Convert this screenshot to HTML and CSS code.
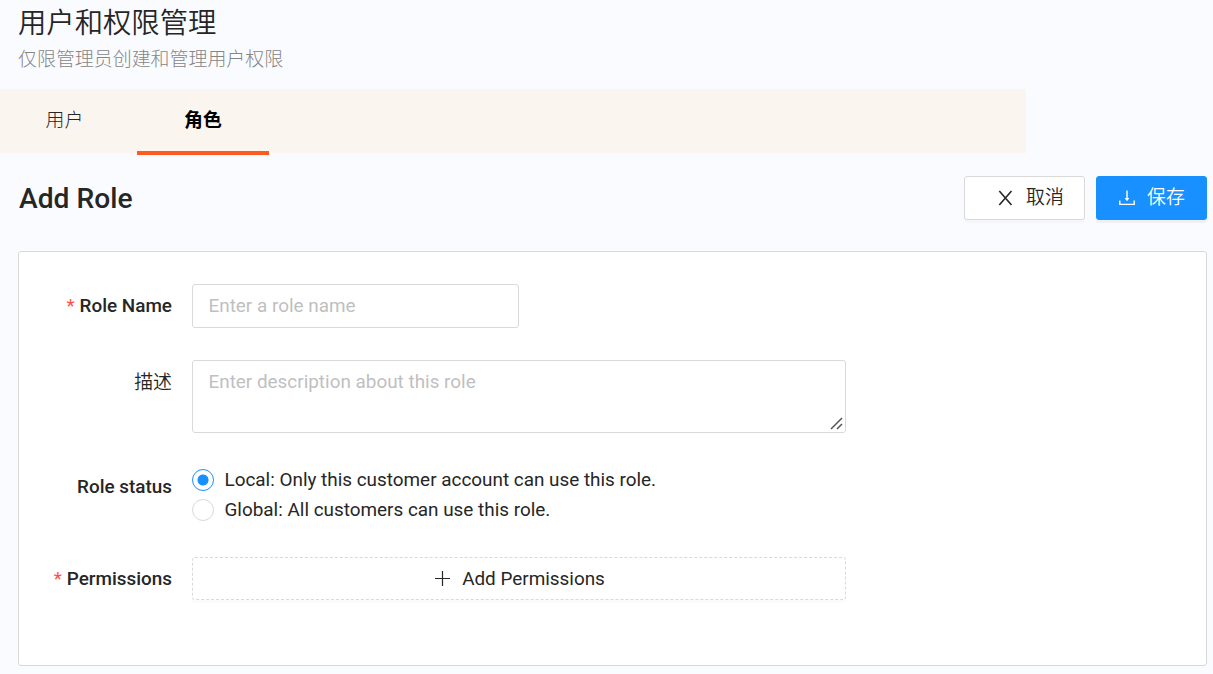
FILE: index.html
```html
<!DOCTYPE html>
<html lang="zh-CN">
<head>
<meta charset="utf-8">
<title>用户和权限管理</title>
<link rel="stylesheet" href="styles.css">
</head>
<body>
<header class="page-header">
  <h1 class="page-title">用户和权限管理</h1>
  <p class="page-subtitle">仅限管理员创建和管理用户权限</p>
</header>
<nav class="tabs">
  <a class="tab tab-users">用户</a>
  <a class="tab tab-active">角色</a>
</nav>
<main class="content">
  <div class="toolbar">
    <h2 class="section-title">Add Role</h2>
    <div class="actions">
      <button class="btn btn-cancel" type="button">
        <svg class="icon-close" viewBox="0 0 15 17" width="15" height="17" fill="none" stroke="currentColor" stroke-width="1.6"><path d="M1.3 1 13.5 15M13.5 1 1.3 15"/></svg>
        <span>取消</span>
      </button>
      <button class="btn btn-save" type="button">
        <svg class="icon-save" viewBox="0 0 16 16" width="16" height="16" fill="none" stroke="currentColor" stroke-width="1.4"><path d="M8 0.5V9M0.8 10.5V14.4H15.2V10.5"/><path d="M5.6 8H10.4L8 11.2Z" fill="currentColor" stroke="none"/></svg>
        <span>保存</span>
      </button>
    </div>
  </div>
  <form class="card">
    <div class="row row-name">
      <label class="label required">Role Name</label>
      <input class="field field-name" type="text" placeholder="Enter a role name">
    </div>
    <div class="row row-description">
      <label class="label label-cjk">描述</label>
      <div class="textarea-wrap">
        <textarea class="field field-description" placeholder="Enter description about this role"></textarea>
        <svg class="resizer" viewBox="0 0 13 13" width="13" height="13" fill="none" stroke="#555" stroke-width="1.5"><path d="M1 12 12 1M7 12 12 7"/></svg>
      </div>
    </div>
    <div class="row row-status">
      <span class="label">Role status</span>
      <div class="radios">
        <label class="radio"><span class="dot dot-checked"></span>Local: Only this customer account can use this role.</label>
        <label class="radio"><span class="dot"></span>Global: All customers can use this role.</label>
      </div>
    </div>
    <div class="row row-permissions">
      <span class="label required">Permissions</span>
      <button class="btn-dashed" type="button">
        <svg viewBox="0 0 15 15" width="15" height="15" fill="none" stroke="currentColor" stroke-width="1.2"><path d="M7.5 0V15M0 7.5H15"/></svg>
        <span>Add Permissions</span>
      </button>
    </div>
  </form>
</main>
</body>
</html>
```
FILE: styles.css
```css
* { box-sizing: border-box; }
body {
  margin: 0;
  height: 674px;
  overflow: hidden;
  background: #fafbff;
  color: #262626;
  font-family: Roboto, "Noto Sans CJK SC", sans-serif;
  font-size: 18.9px;
  line-height: 30px;
}
h1, h2, p { margin: 0; }
button, input, textarea { font: inherit; color: inherit; }

.page-header { height: 89px; padding: 3px 18px 0; }
.page-title { font-size: 28.35px; font-weight: 350; line-height: 42px; }
.page-subtitle { font-size: 18.95px; font-weight: 300; line-height: 30px; color: #858585; }

.tabs { display: flex; width: 1026px; height: 64px; background: #faf5ef; }
.tab { height: 66px; line-height: 63px; text-align: center; }
.tab-users { width: 129px; margin-right: 8px; font-weight: 300; line-height: 64px; }
.tab-active { width: 132px; border-bottom: 4px solid #ff5a1f; color: #000; font-weight: 700; }

.content { padding: 23px 6px 0 18px; }
.toolbar { display: flex; justify-content: space-between; height: 75px; }
.section-title { padding-left: 1px; font-size: 28.2px; font-weight: 500; line-height: 45px; }
.actions { display: flex; gap: 11px; }
.btn {
  display: flex;
  align-items: center;
  height: 44px;
  border: 1px solid #d9d9d9;
  border-radius: 3px;
  background: #fff;
  box-shadow: 0 3px 0 rgba(0, 0, 0, 0.02);
  font-weight: 350;
}
.btn-cancel { width: 121px; padding: 0 0 0 33px; gap: 13px; }
.btn-save {
  width: 111px;
  padding: 0 0 0 22px;
  gap: 12px;
  border-color: #1890ff;
  background: #1890ff;
  color: #fff;
  box-shadow: 0 3px 0 rgba(0, 0, 0, 0.045);
}

.card {
  height: 415px;
  padding: 32px 0 0;
  border: 1px solid #d9d9d9;
  border-radius: 3px;
  background: #fff;
}
.row { display: flex; }
.row-name { margin-bottom: 32px; }
.row-description { margin-bottom: 32px; }
.row-status { height: 60px; margin-bottom: 32px; }
.row-permissions { height: 43px; }
.label {
  width: 153px;
  margin-right: 20px;
  text-align: right;
  font-weight: 500;
  line-height: 44px;
}
.label-cjk { font-weight: 350; line-height: 45px; }
.required::before { content: "*"; margin-right: 5px; color: #ff4d4f; font-weight: 400; }
.field {
  display: block;
  border: 1px solid #d9d9d9;
  border-radius: 3px;
  background: #fff;
  outline: none;
}
.field::placeholder { color: #bfbfbf; opacity: 1; }
.field-name { width: 327px; height: 44px; padding: 0 15.5px 2px; }
.textarea-wrap { position: relative; }
.field-description { width: 654px; height: 73px; padding: 6px 15.5px; resize: none; }
.resizer { position: absolute; right: 3px; bottom: 3px; }
.radio { display: flex; align-items: center; height: 30px; }
.dot {
  width: 22px;
  height: 22px;
  margin-right: 10.5px;
  border: 1px solid #d9d9d9;
  border-radius: 50%;
}
.dot-checked {
  border-color: #1890ff;
  background: radial-gradient(circle, #1890ff 5.1px, #fff 5.9px);
}
.btn-dashed {
  display: flex;
  align-items: center;
  justify-content: center;
  gap: 12px;
  width: 654px;
  height: 43px;
  padding: 0 0 0 2px;
  border: 1px dashed #d9d9d9;
  border-radius: 3px;
  background: #fff;
  box-shadow: 0 3px 0 rgba(0, 0, 0, 0.016);
}
```
